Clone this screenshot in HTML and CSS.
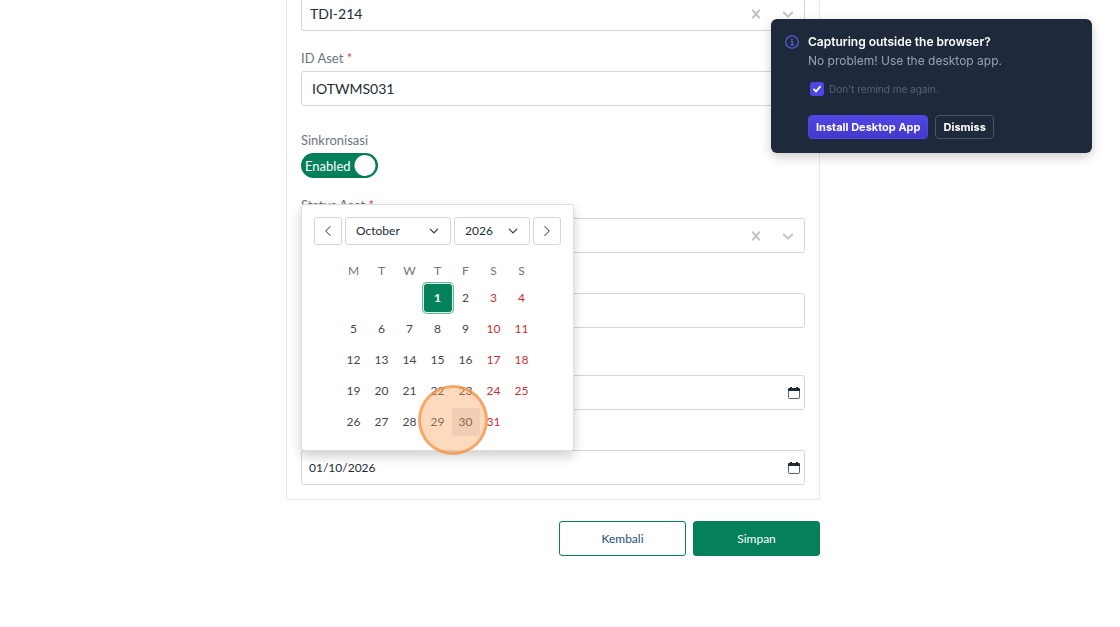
FILE: index.html
```html
<!DOCTYPE html>
<html lang="id">
<head>
  <meta charset="utf-8">
  <title>Aset</title>
  <link rel="stylesheet" href="styles.css">
</head>
<body>
  <svg class="sprite" aria-hidden="true">
    <symbol id="icon-clear" viewBox="0 0 20 20">
      <path fill="currentColor" d="M14.348 14.849c-0.469 0.469-1.229 0.469-1.697 0l-2.651-3.030-2.651 3.029c-0.469 0.469-1.229 0.469-1.697 0-0.469-0.469-0.469-1.229 0-1.697l2.758-3.15-2.759-3.152c-0.469-0.469-0.469-1.228 0-1.697s1.228-0.469 1.697 0l2.652 3.031 2.651-3.031c0.469-0.469 1.228-0.469 1.697 0s0.469 1.229 0 1.697l-2.758 3.152 2.758 3.15c0.469 0.469 0.469 1.229 0 1.698z"/>
    </symbol>
    <symbol id="icon-down" viewBox="0 0 20 20">
      <path fill="currentColor" d="M4.516 7.548c0.436-0.446 1.043-0.481 1.576 0l3.908 3.747 3.908-3.747c0.533-0.481 1.141-0.446 1.574 0 0.436 0.445 0.408 1.197 0 1.615-0.406 0.418-4.695 4.502-4.695 4.502-0.217 0.223-0.502 0.335-0.787 0.335s-0.57-0.112-0.789-0.335c0 0-4.287-4.084-4.695-4.502s-0.436-1.17 0-1.615z"/>
    </symbol>
    <symbol id="icon-calendar" viewBox="0 0 12 12">
      <path fill="none" stroke="currentColor" stroke-opacity=".75" d="M.5 3v7.5a1 1 0 0 0 1 1h9a1 1 0 0 0 1-1V3"/>
      <path fill="currentColor" d="M2 0h2v1h4V0h2v1h1a1 1 0 0 1 1 1v2H0V2a1 1 0 0 1 1-1h1z"/>
    </symbol>
    <symbol id="icon-chevron" viewBox="0 0 16 16">
      <path fill="none" stroke="currentColor" stroke-width="2" stroke-linecap="round" stroke-linejoin="round" d="M2 5l6 6 6-6"/>
    </symbol>
    <symbol id="icon-arrow" viewBox="0 0 16 16">
      <path fill="none" stroke="currentColor" stroke-width="1.4" stroke-linecap="round" stroke-linejoin="round" d="M2 5l6 6 6-6"/>
    </symbol>
  </svg>

  <main class="page">
    <form class="form">
      <div class="card">
        <div class="select select-first">
          <input type="text" class="select-input" aria-label="Tipe" value="TDI-214">
          <button type="button" class="select-btn" aria-label="Clear"><svg><use href="#icon-clear"/></svg></button>
          <button type="button" class="select-btn" aria-label="Open"><svg><use href="#icon-down"/></svg></button>
        </div>

        <div class="field">
          <label for="id-aset">ID Aset <span class="required">*</span></label>
          <input type="text" id="id-aset" class="control control-lg" value="IOTWMS031">
        </div>

        <div class="field field-spaced">
          <label for="sync">Sinkronisasi</label>
          <div class="toggle">
            <input type="checkbox" id="sync" class="toggle-input" checked>
            <span class="toggle-text">Enabled</span>
          </div>
        </div>

        <div class="field">
          <label for="status">Status Aset <span class="required">*</span></label>
          <div class="select">
            <input type="text" id="status" class="select-input">
            <button type="button" class="select-btn" aria-label="Clear"><svg><use href="#icon-clear"/></svg></button>
            <button type="button" class="select-btn" aria-label="Open"><svg><use href="#icon-down"/></svg></button>
          </div>
        </div>

        <div class="field">
          <label for="note">Lokasi</label>
          <input type="text" id="note" class="control">
        </div>

        <div class="field field-spaced">
          <label for="start">Mulai</label>
          <div class="date">
            <input type="text" id="start" class="date-input">
            <button type="button" class="date-btn" aria-label="Calendar"><svg><use href="#icon-calendar"/></svg></button>
          </div>
        </div>

        <div class="field">
          <label for="end">Akhir</label>
          <div class="date">
            <input type="text" id="end" class="date-input" value="01/10/2026">
            <button type="button" class="date-btn" aria-label="Calendar"><svg><use href="#icon-calendar"/></svg></button>

            <div class="picker">
              <div class="picker-head">
                <button type="button" class="nav" aria-label="Previous"><svg class="prev"><use href="#icon-arrow"/></svg></button>
                <div class="drop drop-month">
                  <select aria-label="Month"><option>October</option></select>
                  <svg><use href="#icon-chevron"/></svg>
                </div>
                <div class="drop drop-year">
                  <select aria-label="Year"><option>2026</option></select>
                  <svg><use href="#icon-chevron"/></svg>
                </div>
                <button type="button" class="nav" aria-label="Next"><svg class="next"><use href="#icon-arrow"/></svg></button>
              </div>
              <table class="days">
                <thead>
                  <tr><th>M</th><th>T</th><th>W</th><th>T</th><th>F</th><th>S</th><th>S</th></tr>
                </thead>
                <tbody>
                  <tr>
                    <td></td><td></td><td></td>
                    <td><button type="button" class="selected">1</button></td>
                    <td><button type="button">2</button></td>
                    <td><button type="button" class="weekend">3</button></td>
                    <td><button type="button" class="weekend">4</button></td>
                  </tr>
                  <tr>
                    <td><button type="button">5</button></td>
                    <td><button type="button">6</button></td>
                    <td><button type="button">7</button></td>
                    <td><button type="button">8</button></td>
                    <td><button type="button">9</button></td>
                    <td><button type="button" class="weekend">10</button></td>
                    <td><button type="button" class="weekend">11</button></td>
                  </tr>
                  <tr>
                    <td><button type="button">12</button></td>
                    <td><button type="button">13</button></td>
                    <td><button type="button">14</button></td>
                    <td><button type="button">15</button></td>
                    <td><button type="button">16</button></td>
                    <td><button type="button" class="weekend">17</button></td>
                    <td><button type="button" class="weekend">18</button></td>
                  </tr>
                  <tr>
                    <td><button type="button">19</button></td>
                    <td><button type="button">20</button></td>
                    <td><button type="button">21</button></td>
                    <td><button type="button">22</button></td>
                    <td><button type="button">23</button></td>
                    <td><button type="button" class="weekend">24</button></td>
                    <td><button type="button" class="weekend">25</button></td>
                  </tr>
                  <tr>
                    <td><button type="button">26</button></td>
                    <td><button type="button">27</button></td>
                    <td><button type="button">28</button></td>
                    <td><button type="button">29</button></td>
                    <td><button type="button" class="hovered">30</button></td>
                    <td><button type="button" class="weekend">31</button></td>
                    <td></td>
                  </tr>
                </tbody>
              </table>
              <div class="click-marker"></div>
            </div>
          </div>
        </div>
      </div>

      <div class="actions">
        <button type="button" class="btn btn-outline">Kembali</button>
        <button type="submit" class="btn btn-primary">Simpan</button>
      </div>
    </form>
  </main>

  <aside class="toast">
    <svg class="toast-icon" viewBox="0 0 14 14" fill="none" stroke="currentColor">
      <circle cx="7" cy="7" r="6.3" stroke-width="1.1"/>
      <path d="M5.7 6.4h1.5v3.4M5.5 9.9h3.2" stroke-width="1.1"/>
      <circle cx="7" cy="4.2" r=".8" fill="currentColor" stroke="none"/>
    </svg>
    <div class="toast-body">
      <strong class="toast-title">Capturing outside the browser?</strong>
      <p class="toast-text">No problem! Use the desktop app.</p>
      <label class="toast-check"><input type="checkbox" checked> Don't remind me again.</label>
      <div class="toast-actions">
        <button type="button" class="toast-btn toast-btn-primary">Install Desktop App</button>
        <button type="button" class="toast-btn">Dismiss</button>
      </div>
    </div>
  </aside>
</body>
</html>
```
FILE: styles.css
```css
* {
  box-sizing: border-box;
}
body {
  margin: 0;
  background: #fff;
  color: #212b36;
  font: 13px/20px Lato, sans-serif;
  overflow: hidden;
}
button, input, select {
  font: inherit;
  color: inherit;
  margin: 0;
}
button {
  padding: 0;
  border: 0;
  background: none;
}
.sprite {
  display: none;
}

/* form */
.page {
  padding-right: 14px;
}
.form {
  max-width: 534px;
  margin: 0 auto;
}
.card {
  padding: 0 14px 14px;
  border: 1px solid #e6e8ea;
  border-top: 0;
  border-radius: 0 0 3px 3px;
}
.field {
  margin-top: 17px;
}
.field-spaced {
  margin-top: 24px;
}
.field > label {
  display: block;
  margin-bottom: 3px;
  color: #6c757d;
}
.required {
  color: #e5484d;
}
.control, .select, .date {
  display: flex;
  align-items: center;
  width: 100%;
  height: 35px;
  border: 1px solid #d3d6d9;
  border-radius: 3px;
  background: #fff;
}
.control {
  padding: 0 10px;
}
.control-lg, .select-input {
  font-size: 14px;
}
.select-first {
  height: 31px;
  padding-bottom: 2px;
  border-top: 0;
  border-radius: 0 0 3px 3px;
}
.select-input, .date-input {
  flex: 1;
  min-width: 0;
  border: 0;
  background: none;
}
.select-input {
  padding: 0 8px;
}
.select-btn {
  display: flex;
  justify-content: center;
  width: 32px;
  color: #c4c7ca;
}
.select-btn svg {
  width: 18px;
  height: 18px;
}
.date {
  position: relative;
  font-size: 12px;
}
.date-input {
  padding: 0 7px;
}
.date-btn {
  display: flex;
  padding: 0 4px;
  color: #212b36;
}
.date-btn svg {
  width: 12px;
  height: 12px;
}

.toggle {
  position: relative;
  display: flex;
  align-items: center;
  width: 77px;
  height: 25px;
}
.toggle-input {
  position: absolute;
  inset: 0;
  width: 100%;
  height: 100%;
  appearance: none;
  border: 2px solid #047a55;
  border-radius: 13px;
  background: radial-gradient(circle at 62px 50%, #fff 10px, #04805a 11px);
}
.toggle-text {
  position: relative;
  padding-left: 4px;
  color: #fff;
  pointer-events: none;
}

.actions {
  display: flex;
  justify-content: flex-end;
  gap: 7px;
  margin-top: 21px;
}
.btn {
  width: 127px;
  height: 35px;
  border: 1px solid #04805a;
  border-radius: 3px;
  font-size: 12px;
}
.btn-outline {
  color: #1d4f7c;
}
.btn-primary {
  background: #04805a;
  color: #fff;
}

/* date picker */
.picker {
  position: absolute;
  left: -1px;
  bottom: 100%;
  z-index: 1;
  width: 273px;
  padding: 12px 12px 13px;
  border: 1px solid #dcdfe2;
  border-radius: 3px;
  background: #fff;
  box-shadow: 0 5px 12px rgba(0, 0, 0, .2);
}
.picker-head {
  display: flex;
  gap: 3px;
}
.nav {
  display: flex;
  align-items: center;
  justify-content: center;
  width: 28px;
  height: 28px;
  border: 1px solid #d3d6d9;
  border-radius: 3px;
}
.nav svg {
  width: 12px;
  height: 12px;
  color: #454f59;
}
.prev {
  transform: rotate(90deg);
}
.next {
  transform: rotate(-90deg);
}
.drop {
  position: relative;
  height: 28px;
}
.drop-month {
  width: 106px;
}
.drop-year {
  width: 76px;
}
.drop select {
  width: 100%;
  height: 100%;
  padding: 0 10px;
  appearance: none;
  border: 1px solid #d3d6d9;
  border-radius: 3px;
  background: #fff;
}
.drop svg {
  position: absolute;
  top: 9px;
  right: 12px;
  width: 10px;
  height: 10px;
  color: #343a40;
  pointer-events: none;
}
.days {
  margin: 15px auto 0;
  border-collapse: collapse;
}
.days th {
  width: 28px;
  height: 22px;
  padding: 0;
  color: #6c757d;
  font-weight: normal;
}
.days td {
  height: 31px;
  padding: 0;
}
.days button {
  display: block;
  width: 28px;
  height: 28px;
  border-radius: 3px;
  color: #3f474f;
}
.days .weekend {
  color: #c53030;
}
.days .selected {
  background: #04805a;
  color: #fff;
  font-weight: bold;
  box-shadow: 0 0 0 1px #d9efe6, 0 0 0 2px #5fb897;
}
.days .hovered {
  background: #e9ecef;
}
.click-marker {
  position: absolute;
  left: 116px;
  bottom: -5px;
  width: 70px;
  height: 70px;
  border: 3px solid rgba(240, 145, 65, .7);
  border-radius: 50%;
  background: rgba(250, 160, 90, .4);
  pointer-events: none;
}

/* desktop app notice */
.toast {
  position: fixed;
  top: 19px;
  right: 28px;
  z-index: 2;
  display: flex;
  gap: 9px;
  width: 321px;
  padding: 14px;
  border-radius: 6px;
  background: #1e293b;
  color: #fff;
  font: 12px/18px Inter, sans-serif;
  box-shadow: 0 4px 12px rgba(0, 0, 0, .2);
}
.toast-icon {
  width: 14px;
  height: 14px;
  margin-top: 2px;
  color: #6366f1;
}
.toast-title {
  display: block;
  font-weight: 600;
}
.toast-text {
  margin: 1px 0 0;
  color: #94a3b8;
}
.toast-check {
  display: flex;
  align-items: center;
  gap: 5px;
  margin: 10px 0 17px 2px;
  color: #55637a;
  font-size: 10px;
}
.toast-check input {
  width: 14px;
  height: 14px;
  margin: 0;
  appearance: none;
  border-radius: 3px;
  background: #4f46e5 url("data:image/svg+xml,%3Csvg xmlns='http://www.w3.org/2000/svg' viewBox='0 0 14 14'%3E%3Cpath d='M4 7.4l2 2 4-4.6' fill='none' stroke='%23fff' stroke-width='1.8' stroke-linecap='round'/%3E%3C/svg%3E");
}
.toast-actions {
  display: flex;
  gap: 7px;
}
.toast-btn {
  height: 24px;
  padding: 0 7px;
  border: 1px solid #475569;
  border-radius: 4px;
  font-size: 11px;
  font-weight: bold;
}
.toast-btn-primary {
  border-color: #4f46e5;
  background: linear-gradient(#4f46e5, #4338ca);
}
```
